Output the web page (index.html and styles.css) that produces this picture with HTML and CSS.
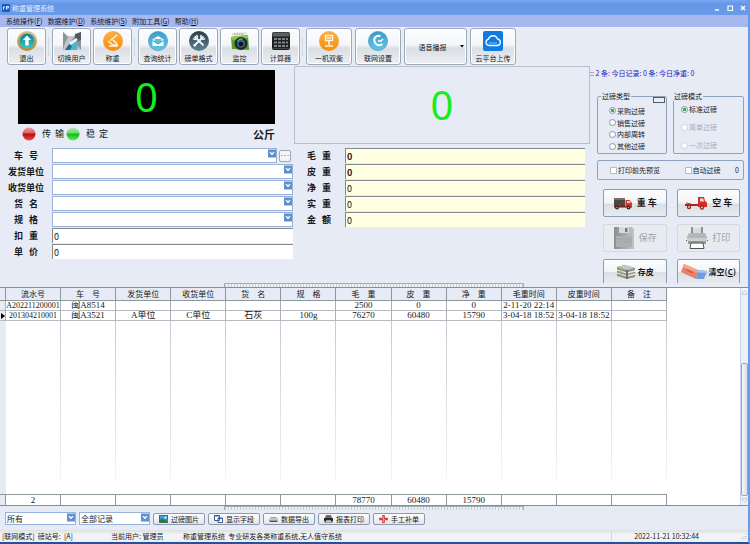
FILE: index.html
```html
<!DOCTYPE html>
<html lang="zh-CN">
<head>
<meta charset="utf-8">
<title>称重管理系统</title>
<link rel="stylesheet" href="styles.css">
</head>
<body>
<svg class="defs" aria-hidden="true">
  <defs>
    <linearGradient id="gold" x1="0" y1="0" x2="0" y2="1"><stop offset="0" stop-color="#d8c08a"/><stop offset="1" stop-color="#b8862f"/></linearGradient>
    <linearGradient id="teal" x1="0" y1="0" x2="0" y2="1"><stop offset="0" stop-color="#157f92"/><stop offset="1" stop-color="#35c8d0"/></linearGradient>
    <linearGradient id="orange" x1="0" y1="0" x2="0" y2="1"><stop offset="0" stop-color="#fbb04a"/><stop offset="1" stop-color="#f78c0c"/></linearGradient>
    <linearGradient id="sky" x1="0" y1="0" x2="0" y2="1"><stop offset="0" stop-color="#3d9cc4"/><stop offset="1" stop-color="#5fc8ea"/></linearGradient>
    <linearGradient id="slate" x1="0" y1="0" x2="0" y2="1"><stop offset="0" stop-color="#2c3c48"/><stop offset="1" stop-color="#5a8496"/></linearGradient>
    <linearGradient id="steel" x1="0" y1="0" x2="1" y2="0"><stop offset="0" stop-color="#8a8d90"/><stop offset="1" stop-color="#c2c4c6"/></linearGradient>
    <linearGradient id="redlamp" x1="0" y1="0" x2="0" y2="1"><stop offset="0" stop-color="#e8a0a0"/><stop offset=".42" stop-color="#d86060"/><stop offset=".5" stop-color="#b80c0c"/><stop offset="1" stop-color="#f04a4a"/></linearGradient>
    <linearGradient id="greenlamp" x1="0" y1="0" x2="0" y2="1"><stop offset="0" stop-color="#b0e8b0"/><stop offset=".42" stop-color="#70d870"/><stop offset=".5" stop-color="#14b81c"/><stop offset="1" stop-color="#5cf05c"/></linearGradient>
    <symbol id="drop" viewBox="0 0 8 8"><rect width="8" height="8" fill="#5f90d2"/><path d="M2 2.6 4 4.8 6 2.6" fill="none" stroke="#fff" stroke-width="1.3"/></symbol>
  </defs>
</svg>

<header class="titlebar">
  <svg class="app-icon" viewBox="0 0 8 8"><rect width="8" height="8" rx="1" fill="#1c5fc4"/><path d="M1.5 5.5V3h1.500M4.500 5.500V2.500h2v1.500h-2" fill="none" stroke="#e4eeff"/></svg>
  <h1>称重管理系统</h1>
  <div class="window-controls">
    <button aria-label="最小化"><svg viewBox="0 0 8 8"><path d="M2 6h4" stroke="#fff" stroke-width="1.400"/></svg></button>
    <button aria-label="最大化"><svg viewBox="0 0 8 8"><path d="M2 2h4.500v4.500H2z" fill="none" stroke="#fff" stroke-width="1.200"/></svg></button>
    <button aria-label="关闭"><svg viewBox="0 0 8 8"><path d="M2 2l4 4M6 2 2 6" stroke="#fff" stroke-width="1.500"/></svg></button>
  </div>
</header>

<nav class="menubar">
  <a href="#">系统操作(<u>F</u>)</a>
  <a href="#">数据维护(<u>D</u>)</a>
  <a href="#">系统维护(<u>S</u>)</a>
  <a href="#">附加工具(<u>G</u>)</a>
  <a href="#">帮助(<u>H</u>)</a>
</nav>

<div class="toolbar">
  <div class="tool-group">
    <button class="tool"><svg viewBox="0 0 20 20"><circle cx="10" cy="10" r="10" fill="url(#gold)"/><circle cx="10" cy="10" r="7.600" fill="url(#teal)"/><path d="M10 4.500 14 9h-2.300v5.500H8.300V9H6z" fill="#fff"/></svg>退出</button>
  </div>
  <div class="tool-group">
    <button class="tool"><svg viewBox="0 0 20 20"><path d="M1 1l5 4h7l6-4v18H1z" fill="#c4c8ca"/><path d="M1 1l5 5-3 6-2 7zM19 1v18l-5-7-5-3z" fill="#8e9598"/><path d="M13 3l6-2v8l-7 3z" fill="#4e5c60"/><path d="M5 19l3-7 5-4 3 5-1 6z" fill="#4cb4d4"/><path d="M3 19l4-6 3 2-2 4z" fill="#1d6e92"/><path d="M7 12l7-5 2 2-7 5z" fill="#e9f0f2"/></svg>切换用户</button>
    <button class="tool"><svg viewBox="0 0 20 20"><circle cx="10" cy="10" r="10" fill="url(#orange)"/><path d="M14 4 7.500 9.500M10 9l4 4M5 10l5 4h5M6 15h9" fill="none" stroke="#fff3dc" stroke-width="1.600"/></svg>称重</button>
  </div>
  <div class="tool-group">
    <button class="tool"><svg viewBox="0 0 20 20"><circle cx="10" cy="10" r="9.600" fill="url(#sky)" stroke="#3a90ba" stroke-width=".6"/><path d="M4.500 8.500 10 5l5.500 3.500V15h-11z" fill="#fff"/><path d="M6.500 8h7v2.500L10 13l-3.500-2.500z" fill="#68b8da"/><path d="M4.500 9.500 10 13l5.500-3.500" fill="none" stroke="#3a9cc8"/></svg>查询统计</button>
    <button class="tool"><svg viewBox="0 0 20 20"><circle cx="10" cy="10" r="10" fill="url(#slate)"/><path d="M5.500 5.500l9 9M14.500 5.500l-9 9" stroke="#eef6fa" stroke-width="2"/><path d="M4 7.500A2.400 2.400 0 0 0 7.500 4M16 7.500A2.400 2.400 0 0 1 12.500 4M4.500 13.500l2 2" fill="none" stroke="#eef6fa" stroke-width="1.500"/></svg>磅单格式</button>
    <button class="tool"><svg viewBox="0 0 20 20"><path d="M2 2l14-1 2 5H2z" fill="#e4e8de"/><path d="M4 3h9" stroke="#8c9488" stroke-dasharray="1.500 1"/><path d="M1 6l17-2 1 15-17-1z" fill="#5a9c2c"/><path d="M1 6l17-2v3L2 9z" fill="#8cc84c"/><circle cx="11" cy="12.500" r="6.500" fill="#1c2c30"/><circle cx="11" cy="12.500" r="4" fill="#3c646c"/><circle cx="11" cy="13" r="2.300" fill="#0c1418"/><path d="M7.500 10a5 5 0 0 1 5-2" fill="none" stroke="#a8d4dc"/></svg>监控</button>
    <button class="tool"><svg viewBox="0 0 20 20"><rect x="1" y="1" width="18" height="18" rx="2" fill="#1e2022"/><rect x="1.500" y="1.500" width="17" height="4" rx="1" fill="#5c6064"/><path d="M3 8h14M3 11.500h14M3 15h14" stroke="#7e8488" stroke-width="2" stroke-dasharray="3 1"/><path d="M2 17.500h16" stroke="#404448"/></svg>计算器</button>
  </div>
  <div class="tool-group wide">
    <button class="tool"><svg viewBox="0 0 20 20"><circle cx="10" cy="10" r="10" fill="url(#orange)"/><path d="M6.500 4.500h7v5h-7zM10 9.500V14M6 15h8M8 7h4" fill="none" stroke="#fff3dc" stroke-width="1.500"/></svg>一机双衡</button>
    <button class="tool"><svg viewBox="0 0 20 20"><circle cx="10" cy="10" r="9.600" fill="url(#sky)" stroke="#3a90ba" stroke-width=".6"/><path d="M12.500 5C8 4 5.500 7 6.500 10.500S11 15.500 14.500 13" fill="none" stroke="#fff" stroke-width="2"/><path d="M10 10h3l2-2" fill="none" stroke="#fff" stroke-width="1.500"/></svg>联网设置</button>
    <button class="tool voice">语音播报<svg class="caret" viewBox="0 0 4 3"><path d="M0 0h4L2 2.500z"/></svg></button>
    <button class="tool"><svg viewBox="0 0 20 20"><rect width="20" height="20" rx="2" fill="#0d7be0"/><path d="M6 14.500a3.200 3.200 0 0 1-.5-6.300 4.700 4.700 0 0 1 9-.2 3.300 3.300 0 0 1 .2 6.500z" fill="none" stroke="#fff" stroke-width="1.300"/><path d="M6 12h8" stroke="#b4daff" stroke-dasharray="1.500 .6"/></svg>云平台上传</button>
  </div>
</div>

<main class="workspace">
  <section class="entry">
    <output class="weight dark">0</output>
    <div class="lamps">
      <svg viewBox="0 0 14 14"><circle cx="7" cy="7" r="6.500" fill="url(#redlamp)"/></svg><span>传 输</span>
      <svg viewBox="0 0 14 14"><circle cx="7" cy="7" r="6.500" fill="url(#greenlamp)"/></svg><span>稳 定</span>
      <strong>公斤</strong>
    </div>
    <form class="fields">
      <div class="field"><label for="plate">车 号</label><div class="combo"><select id="plate"><option></option></select><svg><use href="#drop"/></svg></div><button type="button" class="more" aria-label="更多">...</button></div>
      <div class="field"><label for="sender">发货单位</label><div class="combo"><select id="sender"><option></option></select><svg><use href="#drop"/></svg></div></div>
      <div class="field"><label for="receiver">收货单位</label><div class="combo"><select id="receiver"><option></option></select><svg><use href="#drop"/></svg></div></div>
      <div class="field"><label for="goods">货 名</label><div class="combo"><select id="goods"><option></option></select><svg><use href="#drop"/></svg></div></div>
      <div class="field"><label for="spec">规 格</label><div class="combo"><select id="spec"><option></option></select><svg><use href="#drop"/></svg></div></div>
      <div class="field"><label for="deduct">扣 重</label><input id="deduct" value="0"></div>
      <div class="field"><label for="price">单 价</label><input id="price" value="0"></div>
    </form>
  </section>

  <section class="result">
    <output class="weight light">0</output>
    <form class="fields">
      <div class="field"><label for="gross">毛 重</label><input class="strong" id="gross" value="0"></div>
      <div class="field"><label for="tare">皮 重</label><input class="strong" id="tare" value="0"></div>
      <div class="field"><label for="net">净 重</label><input id="net" value="0"></div>
      <div class="field"><label for="actual">实 重</label><input id="actual" value="0"></div>
      <div class="field"><label for="amount">金 额</label><input id="amount" value="0"></div>
    </form>
  </section>

  <aside class="side">
    <p class="summary">:: 2 条: 今日记录: 0 条: 今日净重: 0</p>
    <div class="modes">
      <fieldset class="types"><legend>过磅类型</legend><span class="swatch"></span>
        <label><input type="radio" name="type" checked>采购过磅</label>
        <label><input type="radio" name="type">销售过磅</label>
        <label><input type="radio" name="type">内部周转</label>
        <label><input type="radio" name="type">其他过磅</label>
      </fieldset>
      <fieldset class="kinds"><legend>过磅模式</legend>
        <label><input type="radio" name="mode" checked>标准过磅</label>
        <label class="off"><input type="radio" name="mode" disabled>简单过磅</label>
        <label class="off"><input type="radio" name="mode" disabled>一次过磅</label>
      </fieldset>
    </div>
    <div class="checks">
      <label><input type="checkbox">打印前先预览</label>
      <label><input type="checkbox">自动过磅</label>
      <span>0</span>
    </div>
    <div class="actions">
      <button class="action"><svg viewBox="0 0 20 14"><path d="M1 2h11v8H1z" fill="#4a4644"/><path d="M1 2h11v2H1z" fill="#75706c"/><path d="M1 10h18v1.500H1z" fill="#7c1c18"/><path d="M12.500 4h4l2.500 3v4h-6.500z" fill="#d8322c"/><path d="M14 5h2.300l1.500 2H14z" fill="#f4c8c4"/><g fill="#2a2424"><circle cx="4" cy="11.500" r="2"/><circle cx="15.500" cy="11.500" r="2"/></g><g fill="#b0a8a8"><circle cx="4" cy="11.500" r=".8"/><circle cx="15.500" cy="11.500" r=".8"/></g></svg>重 车</button>
      <button class="action"><svg class="big" viewBox="0 0 24 14"><path d="M1 8h14v2H1z" fill="#b02420"/><path d="M2 7l5 1" stroke="#c83c34"/><path d="M14 1h6l1 4 2 1.500V11h-9z" fill="#d42c26"/><path d="M16 2.500h3.300l.7 3h-4z" fill="#f6dedc"/><g fill="#8c2c28"><circle cx="5" cy="11" r="2.200"/><circle cx="18" cy="11.500" r="2.200"/></g><g fill="#eed0ce"><circle cx="5" cy="11" r=".9"/><circle cx="18" cy="11.500" r=".9"/></g></svg>空 车</button>
      <button class="action" disabled><svg class="tall" viewBox="0 0 22 22"><path d="M1 0h18l2 2v20H1z" fill="url(#steel)"/><path d="M6 0h10v6H6z" fill="#d8d9da"/><path d="M12 1h2.500v4H12z" fill="#77797c"/><path d="M3 9h16v11H3z" fill="#adafb1"/><path d="M3 12h16M3 15h16" stroke="#9a9c9e" stroke-width=".5"/></svg>保存</button>
      <button class="action" disabled><svg class="tall" viewBox="0 0 22 22"><path d="M6 1h10v6H6z" fill="#dadbdc"/><path d="M6 0v7M16 0v7M0 13.500h22" stroke="#55585a" stroke-width="1.200"/><path d="M3 6h16l2.500 5H.5z" fill="#b4b6b8"/><path d="M1 11h20v3H1z" fill="#ccced0"/><path d="M2 14h18v3H2z" fill="#989a9c"/><path d="M5 16h12l1 5.500H4z" fill="#fff" stroke="#505254"/></svg>打印</button>
      <button class="action cut small"><svg viewBox="0 0 20 14"><path d="M1 2l8-2 10 3v9l-8 2-10-3z" fill="#8c9092"/><path d="M1 2l8-2 10 3-8 2z" fill="#c4c8b8"/><path d="M1 5l10 3 8-2M1 8l10 3 8-2" fill="none" stroke="#e8ead8" stroke-width="1.300"/><path d="M11 5v9" stroke="#5a5e50" stroke-width="1.500"/><path d="M5 2v9" stroke="#b8b070" stroke-width="1.500"/></svg>存皮</button>
      <button class="action cut small"><svg class="eraser" viewBox="0 0 26 16"><path d="M3 0l14 6-2 9L0 8z" fill="#ea8068"/><path d="M3 0l14 6-.6 2.500L2 3z" fill="#f4a890"/><path d="M17 6l9 1-3 8-8 0z" fill="#6f9ce0"/><path d="M17 6l9 1-.8 2-8.700-.5z" fill="#a4c4f0"/><path d="M6 6l6 3" stroke="#b84c3c"/></svg><span>清空(<u>C</u>)</span></button>
    </div>
  </aside>
</main>

<div class="splitter"><span></span></div>

<section class="records">
  <table>
    <colgroup><col class="gutter"><col><col><col><col><col><col><col><col><col><col><col><col></colgroup>
    <thead>
      <tr><th></th><th>流水号</th><th>车　号</th><th>发货单位</th><th>收货单位</th><th>货　名</th><th>规　格</th><th>毛　重</th><th>皮　重</th><th>净　重</th><th>毛重时间</th><th>皮重时间</th><th>备　注</th></tr>
    </thead>
    <tbody>
      <tr><td></td><td class="serial">A202211200001</td><td>闽A8514</td><td></td><td></td><td></td><td></td><td>2500</td><td>0</td><td>0</td><td>2-11-20 22:14</td><td></td><td></td></tr>
      <tr><td><svg viewBox="0 0 4 6"><path d="M0 0l4 3-4 3z"/></svg></td><td class="serial">201304210001</td><td>闽A3521</td><td>A单位</td><td>C单位</td><td>石灰</td><td>100g</td><td>76270</td><td>60480</td><td>15790</td><td>3-04-18 18:52</td><td>3-04-18 18:52</td><td></td></tr>
      <tr class="rest"><td></td><td></td><td></td><td></td><td></td><td></td><td></td><td></td><td></td><td></td><td></td><td></td><td></td></tr>
    </tbody>
    <tfoot>
      <tr><td></td><td>2</td><td></td><td></td><td></td><td></td><td></td><td>78770</td><td>60480</td><td>15790</td><td></td><td></td><td></td></tr>
    </tfoot>
  </table>
  <div class="scrollbar">
    <svg viewBox="0 0 8 8"><path d="M1 6l3-4 3 4z" fill="#fff" stroke="#a8b4c8" stroke-width=".8"/></svg>
    <div class="track"><div class="thumb"></div></div>
    <svg viewBox="0 0 8 8"><path d="M1 2l3 4 3-4z" fill="#fff" stroke="#a8b4c8" stroke-width=".8"/></svg>
  </div>
</section>

<div class="splitter"><span></span></div>

<div class="filters">
  <div class="combo"><select aria-label="范围"><option>所有</option></select><svg><use href="#drop"/></svg></div>
  <div class="combo"><select aria-label="记录"><option>全部记录</option></select><svg><use href="#drop"/></svg></div>
  <button><svg viewBox="0 0 9 8"><rect x=".5" y=".5" width="8" height="7" fill="#48a0e0" stroke="#566"/><path d="M1 7V5l2-2 2 2 1-1 2 3z" fill="#1c8428"/><circle cx="6.500" cy="2.500" r="1" fill="#fff"/></svg>过磅图片</button>
  <button><svg viewBox="0 0 9 8"><path d="M.5.5h5v5h-5zM4 3h4.500v4.500H4z" fill="#fff" stroke="#445a88"/><path d="M0 1h6M4 3.500h5" stroke="#3464b4" stroke-width="1.200"/></svg>显示字段</button>
  <button><svg viewBox="0 0 9 8"><path d="M0 4l2-2h5l2 2v2.500H0z" fill="#9ca0a4"/><path d="M0 4h9" stroke="#e8eaec"/><path d="M1 6.500h7" stroke="#44484c"/></svg>数据导出</button>
  <button><svg viewBox="0 0 9 8"><path d="M2 0h5l1 3H1z" fill="#686c70"/><path d="M0 3h9v3.500H0z" fill="#25282a"/><path d="M2 5h5l1 3H1z" fill="#c8cccc" stroke="#333" stroke-width=".5"/></svg>报表打印</button>
  <button><svg viewBox="0 0 9 8"><path d="M3.200 0h2.600v2.700h3v2.600h-3V8H3.200V5.300h-3V2.700h3z" fill="#d43c3c"/><path d="M3 3l3 2M4.500 1v6" stroke="#f4b0b0" stroke-width=".7"/></svg>手工补单</button>
</div>

<footer class="statusbar">
  <span>[联网模式]&nbsp; 磅站号:&nbsp; [A]</span>
  <span>当前用户: 管理员</span>
  <span>称重管理系统&nbsp; 专业研发各类称重系统,无人值守系统</span>
  <time>2022-11-21 10:32:44</time>
  <svg viewBox="0 0 8 8"><path d="M6 2v1M6 4v1M4 4v1M6 6v1M4 6v1M2 6v1" stroke="#b0b4ba"/></svg>
</footer>
</body>
</html>
```
FILE: styles.css
```css
* { box-sizing: border-box; }

body {
  margin: 0;
  height: 100vh;
  display: flex;
  flex-direction: column;
  border-right: 2px solid #6a9ce4;
  border-bottom: 2px solid #2450a0;
  background: #e6ebf5;
  color: #16181c;
  font: 7px/10px "Noto Sans CJK SC", sans-serif;
  overflow: hidden;
}

button, input, select { margin: 0; font: inherit; color: inherit; }
button { padding: 0; }
a { color: inherit; text-decoration: none; }
svg { display: block; flex: none; }
.defs { position: absolute; width: 0; height: 0; }

/* Title and menu */
.titlebar {
  display: flex;
  align-items: center;
  gap: 2px;
  height: 15px;
  margin-right: -2px;
  padding: 0 3px 0 2px;
  flex: none;
  background: linear-gradient(#78a6f0, #6496e6 30%, #6b9ceb);
  color: #e4eeff;
}
.titlebar h1 { margin: 0; font-size: 7px; font-weight: 400; }
.app-icon { width: 8px; height: 8px; }
.window-controls { display: flex; gap: 5px; margin-left: auto; }
.window-controls button { width: 8px; height: 8px; border: 0; background: none; }

.menubar {
  display: flex;
  gap: 5px;
  height: 12px;
  padding: 0 6px;
  flex: none;
  align-items: center;
  background: #a7b8ee;
}

/* Toolbar */
.toolbar {
  display: flex;
  gap: 6px;
  padding: 1px 7px;
  flex: none;
  background: #e8edf5;
}
.tool-group { display: flex; gap: 2px; position: relative; }
.tool-group + .tool-group::before {
  content: "";
  position: absolute;
  left: -4px;
  top: 10px;
  width: 1px;
  height: 18px;
  background: #d2d8e2;
}
.tool-group.wide { gap: 3px; }
.tool {
  display: flex;
  flex-direction: column;
  align-items: center;
  justify-content: center;
  gap: 2px;
  width: 39px;
  height: 37px;
  border: 1px solid #9ba8b8;
  border-radius: 3px;
  background: linear-gradient(#fbfcfe, #f4f6f9 45%, #dadfe4 55%, #eceff2);
  box-shadow: inset 0 0 0 1px #fff;
}
.tool svg { width: 20px; height: 20px; }
.wide .tool { width: 46px; }
.wide .voice { flex-direction: row; width: 63px; gap: 13px; padding-left: 11px; }
.tool .caret { width: 4px; height: 3px; }

/* Weighing workspace */
.workspace {
  display: grid;
  grid-template-columns: 294fr 296fr 158fr;
  flex: none;
  overflow: hidden;
}
.weight {
  display: flex;
  align-items: center;
  justify-content: center;
  color: #16ee1c;
  font: 40px/54px "Noto Sans", sans-serif;
}
.dark { margin: 4px 19px 0 18px; background: #000; }
.light { padding: 11px 0; border: 1px solid #b9c0cc; }

.lamps {
  display: flex;
  align-items: center;
  height: 20px;
  padding: 0 19px 0 22px;
  font-size: 9px;
}
.lamps svg { width: 14px; height: 14px; }
.lamps span { width: 22px; margin: 0 2px 0 6px; text-align-last: justify; }
.lamps strong { margin-left: auto; font-size: 11px; }

.fields {
  display: flex;
  flex-direction: column;
  gap: 1px;
  padding: 4px 1px 0 8px;
}
.field { display: flex; align-items: center; gap: 8px; height: 15px; }
.field label {
  width: 36px;
  flex: none;
  padding: 0 6px;
  font-size: 9px;
  font-weight: 700;
  white-space: nowrap;
  text-align-last: justify;
}
.field label[for="sender"], .field label[for="receiver"] { padding: 0; }
.field input, .combo {
  flex: 1;
  min-width: 0;
  height: 15px;
  background: #fff;
}
.field input {
  padding: 0 1px;
  border: 0;
  border-top: 1px solid #85898f;
  border-left: 1px solid #85898f;
  font-size: 9px;
  line-height: 14px;
}
.combo {
  display: flex;
  border: 1px solid #98b2d8;
}
.combo select {
  flex: 1;
  min-width: 0;
  appearance: none;
  border: 0;
  padding: 0 1px;
  background: none;
}
.combo svg { width: 8px; height: 9px; }
.more {
  width: 12px;
  height: 12px;
  margin: 0 2px 0 -6px;
  border: 1px solid #9aa8ba;
  border-radius: 2px;
  background: #f3f5f8;
  font-family: "Liberation Mono", monospace;
  font-size: 5px;
  font-weight: 700;
  line-height: 9px;
}
.result .fields { padding-right: 5px; padding-left: 7px; }
.result .field input { background: #ffffe1; }
.result .strong { font-weight: 700; }

/* Options and actions */
.side { padding: 2px 4px 0 0; }
.summary { margin: 0; color: #2420b8; white-space: nowrap; }
.modes {
  display: grid;
  grid-template-columns: 70fr 71fr;
  gap: 6px;
  margin: 13px 0 6px 7px;
}
fieldset {
  display: flex;
  flex-direction: column;
  position: relative;
  min-width: 0;
  height: 63px;
  margin: 0;
  padding: 0 0 1px 11px;
  border: 1px solid #8ea2c0;
  border-radius: 2px;
}
legend { margin-left: -8px; padding: 0 1px; }
.modes label, .checks label { display: flex; align-items: center; gap: 1px; }
.types label { height: 12px; }
.types .swatch {
  position: absolute;
  top: -4px;
  right: 1px;
  width: 12px;
  height: 6px;
  border: 1px solid #555a62;
  background: #eceef2;
}
.types { padding-top: 4px; }
.kinds { gap: 8px; padding-left: 7px; padding-top: 3px; }
.off { color: #a9aeb8; }
input[type="radio"], input[type="checkbox"] {
  appearance: none;
  flex: none;
  width: 7px;
  height: 7px;
  border: 1px solid #8498a8;
  border-radius: 50%;
  background: #fff;
}
input[type="checkbox"] { border-radius: 0; border-color: #b4bcc8; }
input[type="radio"]:checked { background: radial-gradient(#2cae34 35%, #e4f6e4 55%); }
input:disabled { border-color: #ccd2da; }
.checks {
  display: flex;
  align-items: center;
  justify-content: space-between;
  height: 20px;
  margin-left: 7px;
  padding: 0 4px 0 12px;
  border: 1px solid #8ea2c0;
  border-radius: 2px;
}
.checks label:first-child { margin-right: 10px; }

.actions {
  display: grid;
  grid-template-columns: 1fr 1fr;
  gap: 7px 10px;
  margin: 9px 4px 0 13px;
}
.action {
  display: flex;
  align-items: center;
  justify-content: center;
  gap: 4px;
  height: 28px;
  border: 1px solid #8c9cb2;
  border-radius: 2px;
  background: linear-gradient(#fdfdfe, #f2f4f6 50%, #dbdfe3 55%, #e9ecef);
  font-size: 9px;
  font-weight: 700;
  white-space: nowrap;
}
.action svg { width: 20px; height: 14px; }
.action .big { width: 24px; }
.action .tall { width: 22px; height: 22px; }
.action .eraser { width: 26px; height: 16px; }
.action:disabled {
  border-color: #d4d9e0;
  background: #e8ebf0;
  color: #a0a3a8;
  font-weight: 400;
}
.cut { height: 24px; border-bottom: 0; border-radius: 2px 2px 0 0; }
.small { gap: 2px; font-size: 8px; }

/* Splitters */
.splitter { height: 4px; flex: none; padding-left: 224px; }
.splitter span {
  display: block;
  width: 300px;
  height: 4px;
  border: 1px solid #9fb0b8;
  border-bottom: 0;
  background: repeating-linear-gradient(90deg, #c4ced2 0 1px, #eef2f4 1px 3px);
}

/* Records */
.records {
  display: flex;
  flex: 1;
  min-height: 0;
  justify-content: space-between;
  border-top: 1px solid #7f9298;
  border-bottom: 1px solid #7f9298;
  background: #fff;
}
table {
  width: 667px;
  height: 100%;
  table-layout: fixed;
  border-collapse: separate;
  border-spacing: 0;
  font-family: "Liberation Serif", "Noto Sans CJK SC", serif;
}
.gutter { width: 6px; }
th, td {
  height: 10px;
  padding: 0;
  border-right: 1px solid #aab0b6;
  border-bottom: 1px solid #b8bcc2;
  font-size: 9px;
  line-height: 9px;
  text-align: center;
  white-space: nowrap;
  overflow: hidden;
}
th {
  height: 13px;
  border-color: #8d989e;
  background: #e6ebf5;
  font-size: 8px;
  font-weight: 400;
}
.serial { font-size: 8px; }
tbody td:first-child, tfoot td:first-child { background: #e6ebf5; }
td svg { width: 4px; height: 6px; margin-left: 1px; }
.rest td {
  height: auto;
  border-right: 0;
  border-bottom-color: #8d989e;
  background: linear-gradient(#c4cad0, #f2f4f6) right top / 1px calc(100% - 15px) no-repeat;
}
tfoot td { border-color: #8d989e; border-bottom: 0; }

.scrollbar {
  display: flex;
  flex-direction: column;
  width: 8px;
  border-left: 1px solid #c8d4e6;
  background: #edf1f8;
}
.scrollbar svg { width: 7px; height: 9px; }
.track { flex: 1; padding-top: 66px; }
.thumb {
  height: 100%;
  border: 1px solid #8fa6cc;
  border-radius: 2px;
  background: linear-gradient(90deg, #f6f8fc, #d4deee);
}

/* Filters and status */
.filters {
  display: flex;
  align-items: center;
  gap: 3px;
  height: 20px;
  flex: none;
  padding: 0 5px 3px;
}
.filters .combo { flex: none; width: 71px; height: 13px; font-size: 8px; line-height: 10px; }
.filters button {
  display: flex;
  align-items: center;
  justify-content: center;
  gap: 3px;
  width: 52px;
  height: 12px;
  border: 1px solid #8e9aac;
  border-radius: 2px;
  background: linear-gradient(#fdfdfe, #e2e5ea);
}
.filters button svg { width: 9px; height: 8px; }

.statusbar {
  display: grid;
  grid-template-columns: 109px 72px 1fr auto 8px;
  column-gap: 0;
  align-items: center;
  height: 12px;
  flex: none;
  padding-left: 2px;
  background: linear-gradient(#dcdfe4, #f4f5f7 40%, #eef0f3);
  white-space: nowrap;
}
.statusbar time { padding: 0 41px 0 22px; border-left: 1px solid #d4d8de; }
.statusbar svg { width: 8px; height: 8px; }
```
